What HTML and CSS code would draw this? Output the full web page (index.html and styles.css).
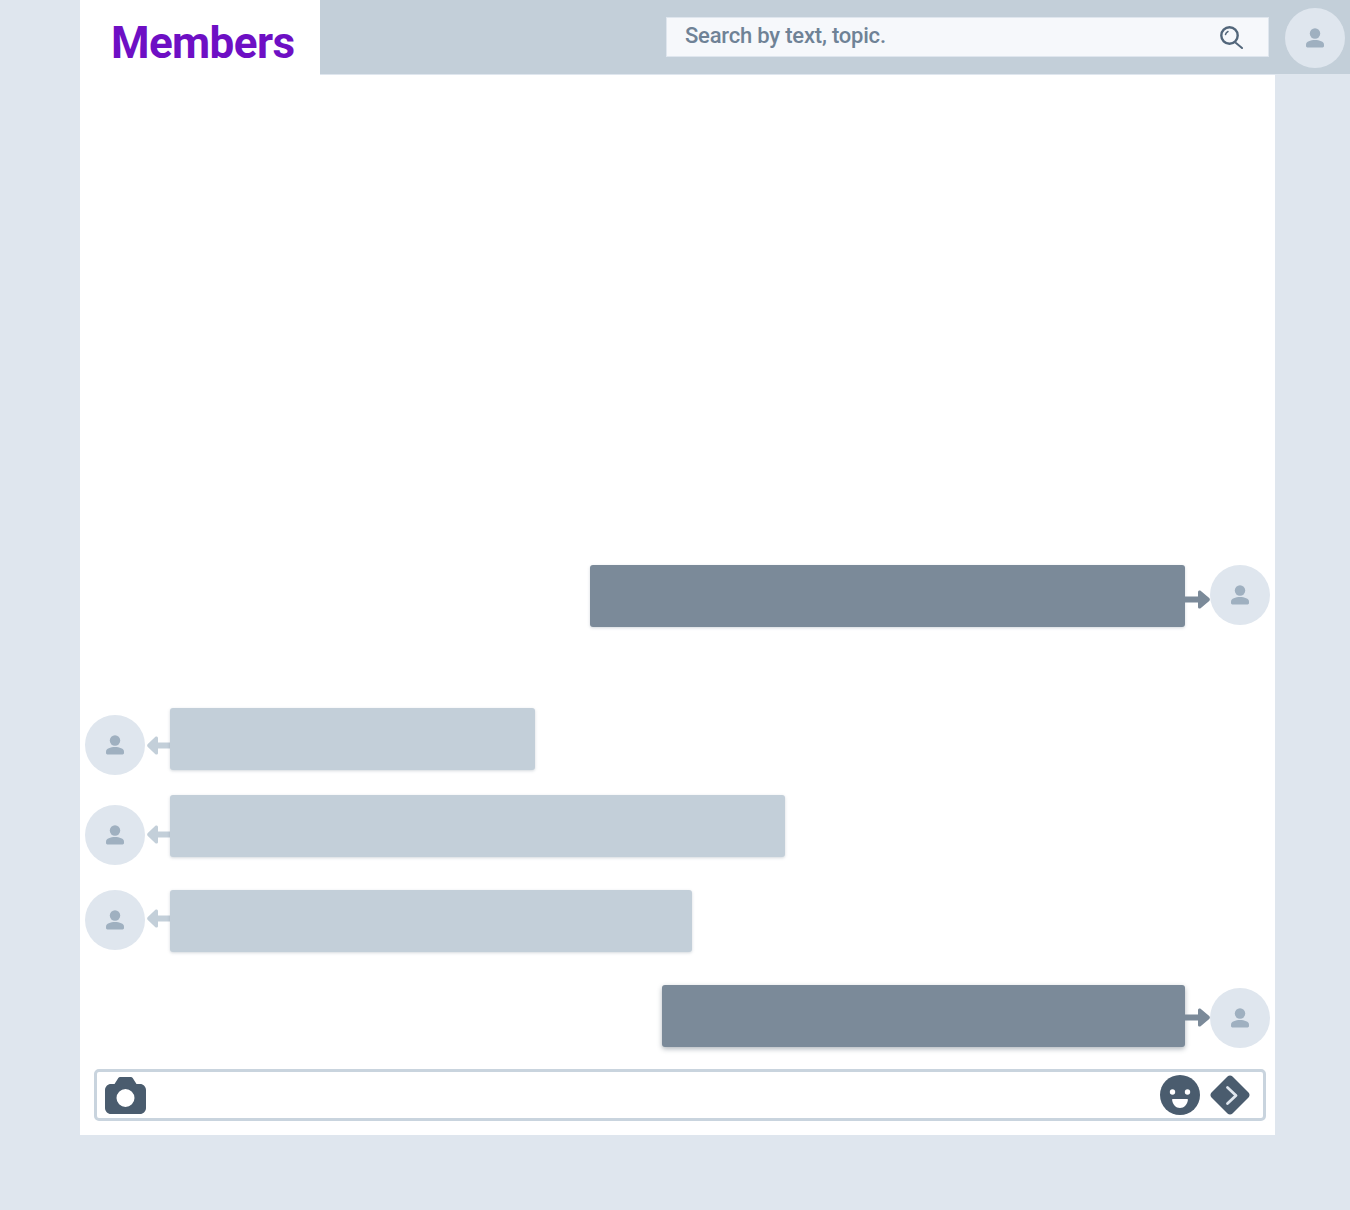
FILE: index.html
```html
<!DOCTYPE html>
<html lang="en">
<head>
    <meta charset="UTF-8">
    <meta name="viewport" content="width=device-width, initial-scale=1.0">
    <title>Members</title>
    <link rel="stylesheet" href="styles.css">
</head>
<body>
    <svg class="sprites" width="0" height="0" aria-hidden="true">
        <symbol id="person" viewBox="0 0 20 20">
            <circle cx="10" cy="5.5" r="5.2"/>
            <path d="M1 18v-1.500C1 13.500 5.600 12 10 12s9 1.500 9 4.500V18c0 .8-.6 1.400-1.400 1.400H2.400C1.600 19.400 1 18.800 1 18z"/>
        </symbol>
        <symbol id="arrow-right" viewBox="0 0 25 19">
            <path d="M0 6.500h13V2c0-1.400 1.600-2 2.600-1.200L24.200 8c.9.800.9 2.200 0 3l-8.600 7.200c-1 .8-2.600.2-2.600-1.200v-4.500H0z"/>
        </symbol>
        <symbol id="arrow-left" viewBox="0 0 23 19">
            <path d="M23 6.500H11V2c0-1.400-1.600-2-2.600-1.200L.8 8c-.9.800-.9 2.200 0 3l7.600 7.200c1 .8 2.600.2 2.600-1.200v-4.500h12z"/>
        </symbol>
    </svg>

    <header class="topbar">
        <div class="logo">Members</div>
        <div class="topbar-right">
            <div class="search">
                <span class="search-text">Search by text, topic.</span>
                <svg class="search-icon" viewBox="0 0 23 23" fill="none" stroke="#52667a">
                    <circle cx="9.500" cy="9.500" r="8.200" stroke-width="2.400"/>
                    <path d="M5.500 8.500a4.500 4.500 0 0 1 2.500-3" stroke-width="1.500" stroke-linecap="round"/>
                    <path d="M16 17l6 5" stroke-width="2" stroke-linecap="round"/>
                </svg>
            </div>
            <div class="avatar"><svg class="person"><use href="#person"/></svg></div>
        </div>
    </header>

    <main class="chat">
        <div class="messages">
            <div class="row row-right first-msg">
                <div class="bubble bubble-dark w-595"></div>
                <div class="who">
                    <svg class="arrow-r arrow-dark lower"><use href="#arrow-right"/></svg>
                    <div class="avatar"><svg class="person"><use href="#person"/></svg></div>
                </div>
            </div>

            <div class="row row-left second-msg">
                <div class="who drop-7">
                    <div class="avatar"><svg class="person"><use href="#person"/></svg></div>
                    <svg class="arrow-l arrow-light"><use href="#arrow-left"/></svg>
                </div>
                <div class="bubble bubble-light w-365"></div>
            </div>

            <div class="row row-left third-msg">
                <div class="who drop-10">
                    <div class="avatar"><svg class="person"><use href="#person"/></svg></div>
                    <svg class="arrow-l arrow-light raise-1"><use href="#arrow-left"/></svg>
                </div>
                <div class="bubble bubble-light w-615"></div>
            </div>

            <div class="row row-left fourth-msg">
                <div class="who">
                    <div class="avatar"><svg class="person"><use href="#person"/></svg></div>
                    <svg class="arrow-l arrow-light raise-2"><use href="#arrow-left"/></svg>
                </div>
                <div class="bubble bubble-light w-522"></div>
            </div>

            <div class="row row-right fifth-msg">
                <div class="bubble bubble-dark bubble-deep w-523"></div>
                <div class="who drop-3">
                    <svg class="arrow-r arrow-dark raise-1"><use href="#arrow-right"/></svg>
                    <div class="avatar"><svg class="person"><use href="#person"/></svg></div>
                </div>
            </div>
        </div>

        <div class="composer">
            <svg class="camera" viewBox="0 0 41 37">
                <path fill-rule="evenodd" d="M6 7h3.500L13 1.500C13.500.5 14.300 0 15.500 0h10c1.200 0 2 .5 2.500 1.500L31.500 7H35c3.300 0 6 2.700 6 6v18c0 3.300-2.700 6-6 6H6c-3.300 0-6-2.700-6-6V13c0-3.300 2.700-6 6-6zm14.500 5a9 9 0 1 0 0 18 9 9 0 0 0 0-18z"/>
            </svg>
            <div class="composer-actions">
                <svg class="smile" viewBox="0 0 40 40">
                    <circle cx="20" cy="20" r="20" fill="#4a5c6e"/>
                    <circle cx="12.500" cy="17" r="2.700" fill="#fff"/>
                    <circle cx="27.500" cy="17" r="2.700" fill="#fff"/>
                    <path d="M13 24h14c.6 0 1 .5.900 1-.7 4.500-3.700 8-7.900 8s-7.200-3.500-7.900-8c-.1-.5.300-1 .9-1z" fill="#fff"/>
                </svg>
                <svg class="send" viewBox="0 0 40 40">
                    <path d="M17.500 1.500c1.400-1.400 3.600-1.400 5 0l16 16c1.400 1.400 1.400 3.600 0 5l-16 16c-1.400 1.400-3.600 1.400-5 0l-16-16c-1.400-1.400-1.400-3.600 0-5z" fill="#4a5c6e"/>
                    <path d="M17.500 12.500l8.500 8-8.500 8" fill="none" stroke="#dfe6ee" stroke-width="2.800" stroke-linecap="round" stroke-linejoin="round"/>
                </svg>
            </div>
        </div>
    </main>
</body>
</html>
```

FILE: styles.css
```css
/* Geral */
html, body {
    margin: 0;
    padding: 0;
}

body {
    height: 1210px;
    overflow: hidden;
    background-color: #dfe6ee;
    font-family: "Roboto", "Liberation Sans", sans-serif;
}

.sprites {
    display: block;
    height: 0;
}

/* Topo */
.topbar {
    display: flex;
    height: 75px;
    box-sizing: border-box;
    margin-left: 80px;
    background-color: #c3cfd9;
    border-bottom: 1px solid #dfe6ee;
}

.logo {
    width: 240px;
    height: 75px;
    box-sizing: border-box;
    padding: 15px 0 0 31px;
    background: #fff;
    color: #6e0fc4;
    font-size: 44px;
    line-height: 56px;
    font-weight: 700;
    letter-spacing: -0.600px;
}

.topbar-right {
    flex: 1;
    display: flex;
    align-items: flex-start;
    padding: 8px 5px 0 346px;
}

.search {
    width: 603px;
    height: 40px;
    margin-top: 9px;
    margin-right: 16px;
    padding: 0 25px 3px 18px;
    box-sizing: border-box;
    display: flex;
    align-items: center;
    justify-content: space-between;
    background: #f6f8fb;
    border: 1px solid #dfe6ee;
}

.search-text {
    color: #6f8296;
    font-size: 22px;
    font-weight: 500;
    letter-spacing: -0.200px;
}

.search-icon {
    width: 23px;
    height: 23px;
    margin-top: 3px;
}

/* Avatar */
.avatar {
    width: 60px;
    height: 60px;
    flex-shrink: 0;
    border-radius: 50%;
    background: #dfe6ee;
    display: flex;
    align-items: center;
    justify-content: center;
}

.person {
    width: 20px;
    height: 20px;
    fill: #9fb0c0;
}

/* Conversa */
.chat {
    width: 1195px;
    height: 1060px;
    margin-left: 80px;
    background: #fff;
    display: flex;
    flex-direction: column;
    justify-content: flex-end;
}

.messages {
    display: flex;
    flex-direction: column;
}

.row {
    display: flex;
    align-items: flex-start;
}

.row-right {
    justify-content: flex-end;
    padding-right: 5px;
}

.row-left {
    padding-left: 5px;
}

.second-msg {
    margin-top: 81px;
}

.third-msg {
    margin-top: 20px;
}

.fourth-msg {
    margin-top: 25px;
}

.fifth-msg {
    margin-top: 33px;
}

.who {
    display: flex;
    align-items: center;
}

.drop-3 {
    margin-top: 3px;
}

.drop-7 {
    margin-top: 7px;
}

.drop-10 {
    margin-top: 10px;
}

.arrow-r {
    width: 25px;
    height: 19px;
}

.arrow-l {
    width: 23px;
    height: 19px;
    margin-left: 2px;
}

.arrow-dark {
    fill: #7b8a99;
}

.arrow-light {
    fill: #c3cfd9;
}

.lower {
    margin-top: 8px;
}

.raise-1 {
    margin-bottom: 2px;
}

.raise-2 {
    margin-bottom: 4px;
}

.bubble {
    height: 62px;
    border-radius: 3px;
    box-shadow: 0 1px 3px rgba(80, 100, 120, 0.25);
}

.bubble-dark {
    background: #7b8a99;
}

.bubble-deep {
    box-shadow: 0 2px 5px rgba(60, 75, 90, 0.4);
}

.bubble-light {
    background: #c3cfd9;
}

.w-595 {
    width: 595px;
}

.w-365 {
    width: 365px;
}

.w-615 {
    width: 615px;
}

.w-522 {
    width: 522px;
}

.w-523 {
    width: 523px;
}

/* Campo de mensagem */
.composer {
    height: 46px;
    margin: 21px 9px 14px 14px;
    padding: 0 0 0 8px;
    border: 3px solid #c9d4de;
    border-radius: 5px;
    display: flex;
    align-items: center;
    justify-content: space-between;
}

.camera {
    width: 41px;
    height: 37px;
    fill: #4a5c6e;
}

.composer-actions {
    display: flex;
    align-items: center;
    gap: 10px;
    padding-right: 13px;
}

.smile,
.send {
    width: 40px;
    height: 40px;
}
```
